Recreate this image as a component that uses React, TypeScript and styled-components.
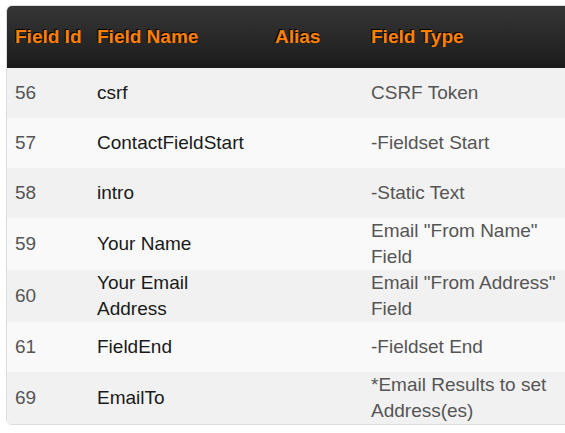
import React from "react";
import styled, { createGlobalStyle } from "styled-components";

const Global = createGlobalStyle`
  html, body { margin: 0; padding: 0; background: #fff; overflow: hidden; }
  body { font-family: "Liberation Sans", Arial, sans-serif; }
`;

const Page = styled.div`
  padding: 5px 0 0 6px;
  width: 700px;
`;

const Table = styled.table`
  border-collapse: separate;
  border-spacing: 0;
  table-layout: fixed;
  width: 574px;
  border: 1px solid #dcdcdc;
  border-radius: 6px;
  overflow: hidden;
  font-size: 19px;
  line-height: 26px;
`;

const HeadRow = styled.tr`
  background: linear-gradient(#363636, #1b1b1b);
`;

const Th = styled.th<{ $w: number; $pr?: number }>`
  width: ${(p) => p.$w}px;
  height: 62px;
  padding: 0 ${(p) => p.$pr ?? 8}px 0 8px;
  text-align: left;
  vertical-align: middle;
  font-weight: bold;
  color: #ff7f00;
  text-shadow: -1px -1px 0 #000;
  white-space: nowrap;
`;

const Row = styled.tr<{ $odd: boolean; $h: number }>`
  background: ${(p) => (p.$odd ? "#f1f1f1" : "#f9f9f9")};
  height: ${(p) => p.$h}px;
`;

const Td = styled.td<{ $tone?: "dim" | "strong"; $pr?: number }>`
  padding: 0 ${(p) => p.$pr ?? 8}px 0 8px;
  vertical-align: middle;
  color: ${(p) => (p.$tone === "strong" ? "#1a1a1a" : "#555")};
`;

const rows = [
  { id: "56", name: "csrf", type: "CSRF Token", h: 50 },
  { id: "57", name: "ContactFieldStart", type: "-Fieldset Start", h: 50 },
  { id: "58", name: "intro", type: "-Static Text", h: 50 },
  { id: "59", name: "Your Name", type: 'Email "From Name" Field', h: 52 },
  { id: "60", name: "Your Email Address", type: 'Email "From Address" Field', h: 52 },
  { id: "61", name: "FieldEnd", type: "-Fieldset End", h: 50 },
  { id: "69", name: "EmailTo", type: "*Email Results to set Address(es)", h: 51 },
];

export default function App() {
  return (
    <>
      <Global />
      <Page>
        <Table>
          <thead>
            <HeadRow>
              <Th $w={66}>Field Id</Th>
              <Th $w={154} $pr={16}>Field Name</Th>
              <Th $w={80}>Alias</Th>
              <Th $w={200}>Field Type</Th>
            </HeadRow>
          </thead>
          <tbody>
            {rows.map((r, i) => (
              <Row key={r.id} $odd={i % 2 === 0} $h={r.h}>
                <Td>{r.id}</Td>
                <Td $tone="strong" $pr={16}>{r.name}</Td>
                <Td />
                <Td>{r.type}</Td>
              </Row>
            ))}
          </tbody>
        </Table>
      </Page>
    </>
  );
}
